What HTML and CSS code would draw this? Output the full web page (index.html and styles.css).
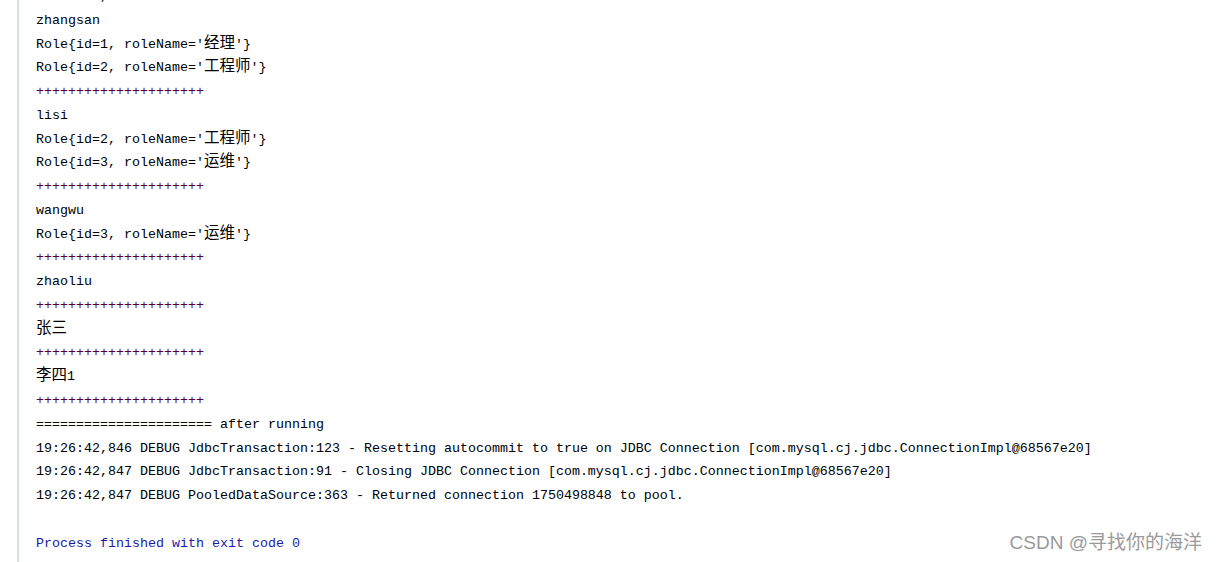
FILE: index.html
```html
<!DOCTYPE html>
<html>
<head>
<meta charset="utf-8">
<link rel="stylesheet" href="styles.css">
</head>
<body>
<div class="console">
<div class="log">
<div class="line">19:26:42,845 DEBUG findAllUser:159 - &lt;==      Total: 6</div>
<div class="line">zhangsan</div>
<div class="line">Role{id=1, roleName='<span class="cjk">经理</span>'}</div>
<div class="line">Role{id=2, roleName='<span class="cjk">工程师</span>'}</div>
<div class="line sep">+++++++++++++++++++++</div>
<div class="line">lisi</div>
<div class="line">Role{id=2, roleName='<span class="cjk">工程师</span>'}</div>
<div class="line">Role{id=3, roleName='<span class="cjk">运维</span>'}</div>
<div class="line sep">+++++++++++++++++++++</div>
<div class="line">wangwu</div>
<div class="line">Role{id=3, roleName='<span class="cjk">运维</span>'}</div>
<div class="line sep">+++++++++++++++++++++</div>
<div class="line">zhaoliu</div>
<div class="line sep">+++++++++++++++++++++</div>
<div class="line"><span class="cjk">张三</span></div>
<div class="line sep">+++++++++++++++++++++</div>
<div class="line"><span class="cjk">李四</span>1</div>
<div class="line sep">+++++++++++++++++++++</div>
<div class="line">====================== after running</div>
<div class="line">19:26:42,846 DEBUG JdbcTransaction:123 - Resetting autocommit to true on JDBC Connection [com.mysql.cj.jdbc.ConnectionImpl@68567e20]</div>
<div class="line">19:26:42,847 DEBUG JdbcTransaction:91 - Closing JDBC Connection [com.mysql.cj.jdbc.ConnectionImpl@68567e20]</div>
<div class="line">19:26:42,847 DEBUG PooledDataSource:363 - Returned connection 1750498848 to pool.</div>
<div class="line"> </div>
<div class="line sys">Process finished with exit code 0</div>
</div>
</div>
<div class="watermark">CSDN @寻找你的海洋</div>
</body>
</html>
```
FILE: styles.css
```css
html, body {
  margin: 0;
  padding: 0;
  background: #ffffff;
  height: 100%;
  overflow: hidden;
}
body {
  position: relative;
}
.console {
  margin-left: 17px;
  border-left: 2px solid #d3e3d8;
  padding-left: 17px;
  height: 100vh;
  box-sizing: border-box;
  overflow: hidden;
}
.log {
  margin-top: -15px;
  font-family: "Liberation Mono", monospace;
  font-size: 13.33px;
  color: #000000;
}
.line {
  height: 23.77px;
  line-height: 23.77px;
  white-space: pre;
}
.cjk {
  font-family: "Noto Sans CJK SC", sans-serif;
  font-size: 15.5px;
  line-height: 1;
}
.sep {
  color: #4c004a;
}
.sys {
  color: #1a1aa6;
}
.watermark {
  position: absolute;
  right: 16px;
  bottom: 8px;
  font-family: "Liberation Sans", "Noto Sans CJK SC", sans-serif;
  font-size: 19px;
  color: #9a9a9a;
  white-space: nowrap;
}
```
